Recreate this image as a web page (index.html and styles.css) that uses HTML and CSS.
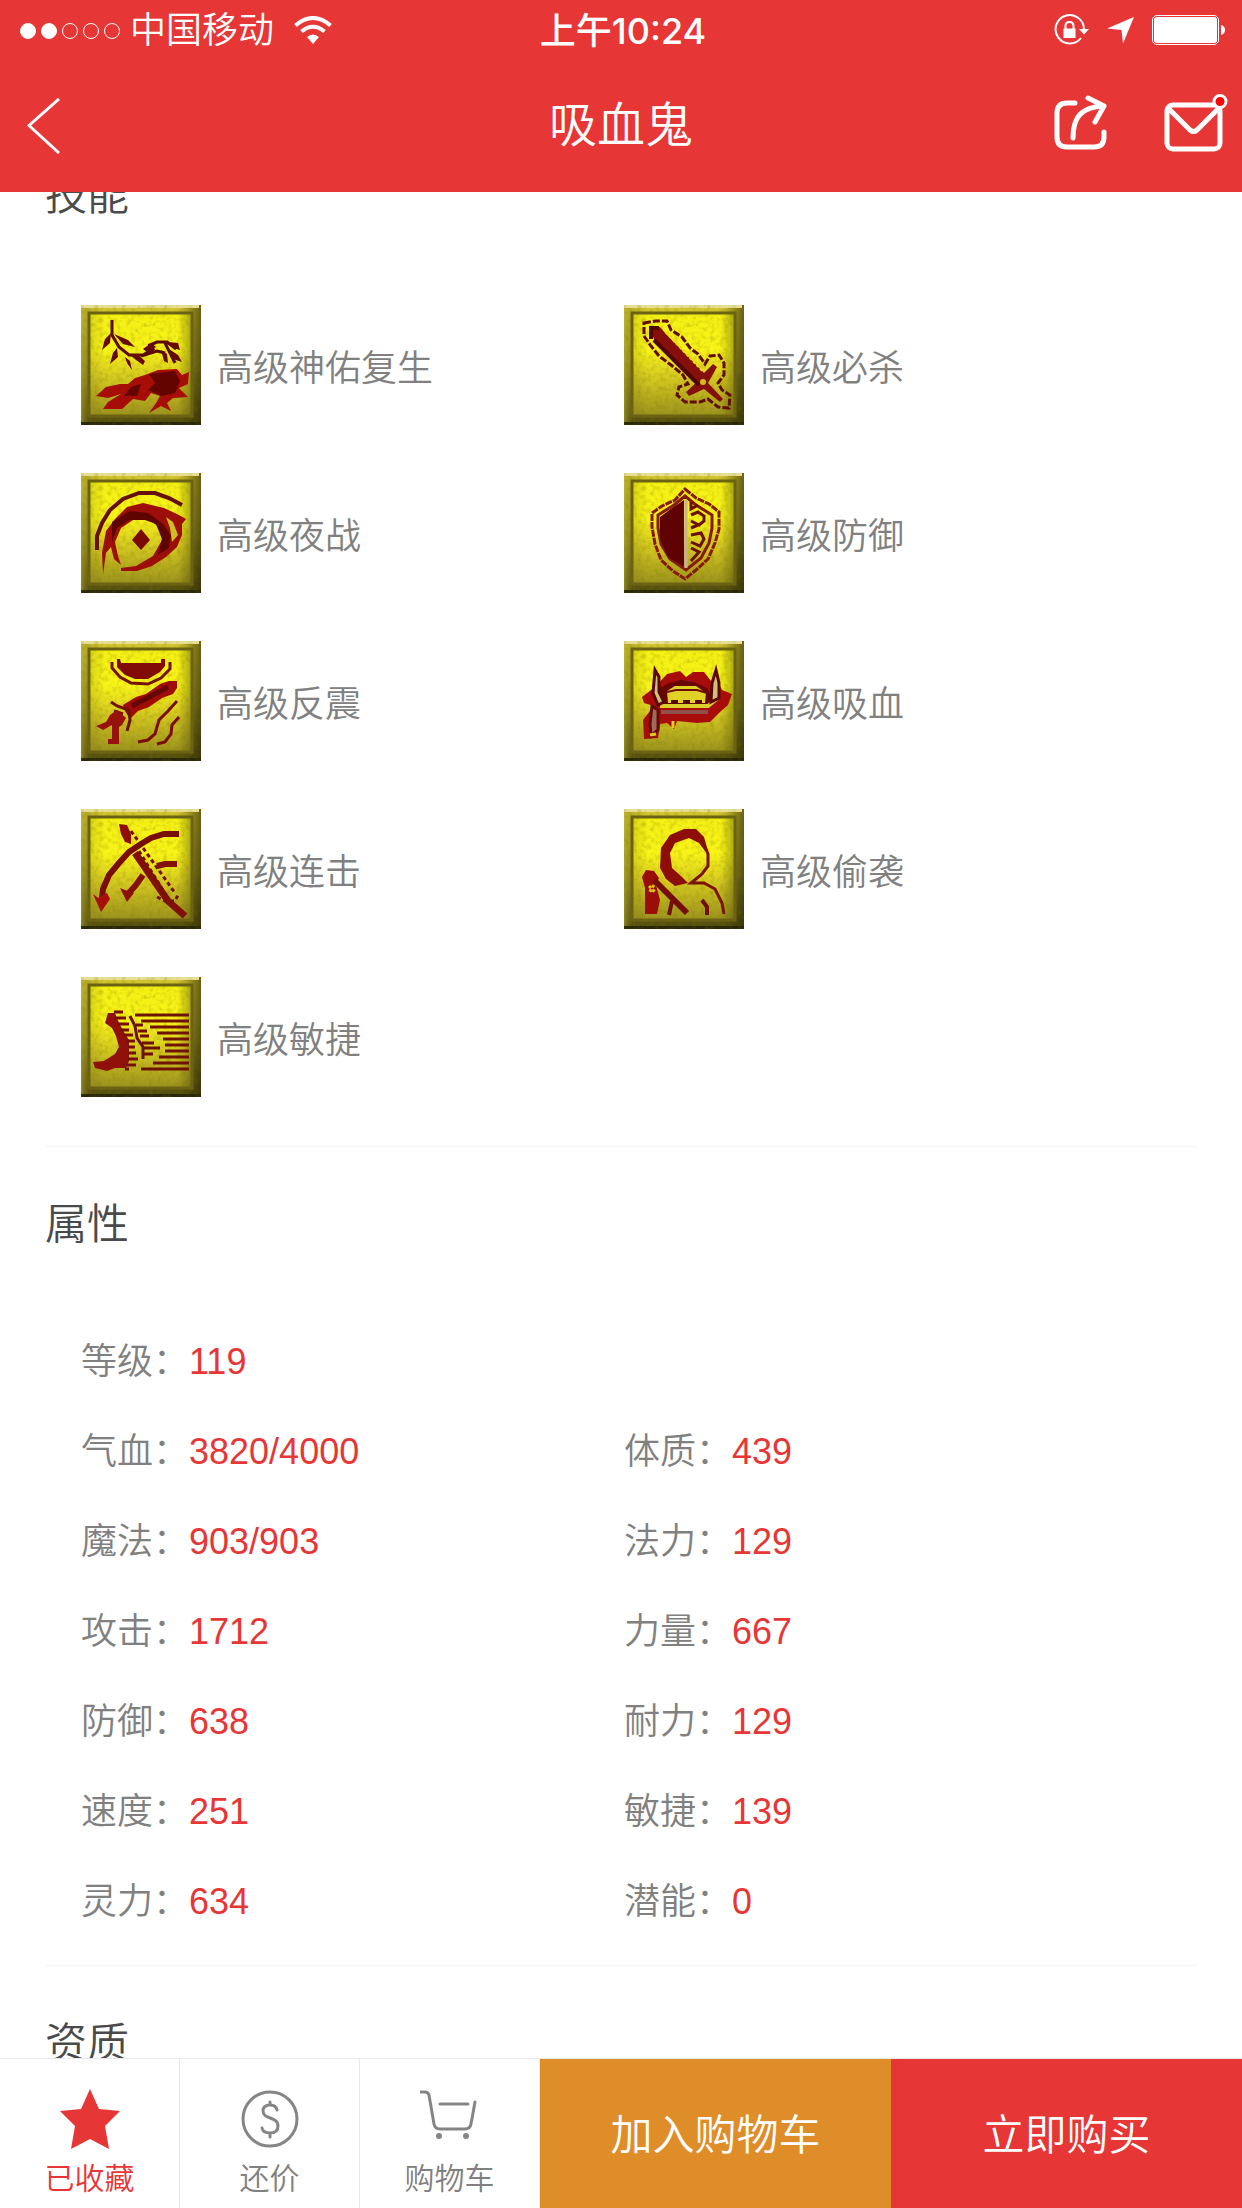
FILE: index.html
```html
<!DOCTYPE html>
<html lang="zh-CN">
<head>
<meta charset="utf-8">
<meta name="viewport" content="width=device-width, initial-scale=1">
<title>吸血鬼</title>
<link rel="stylesheet" href="styles.css">
</head>
<body>
<svg class="defs" width="0" height="0" aria-hidden="true">
  <defs>
    <linearGradient id="face" x1="0" y1="0" x2="0" y2="1">
      <stop offset="0" stop-color="#f4f014"/><stop offset=".35" stop-color="#f8f418"/>
      <stop offset=".6" stop-color="#d8cd20"/><stop offset="1" stop-color="#99901e"/>
    </linearGradient>
    <linearGradient id="rim" x1="0" y1="0" x2="0" y2="1">
      <stop offset="0" stop-color="#d6ca30"/><stop offset=".5" stop-color="#a39a26"/><stop offset="1" stop-color="#4f490e"/>
    </linearGradient>
    <linearGradient id="side" x1="0" y1="0" x2="1" y2="0">
      <stop offset="0" stop-color="#b5aa30" stop-opacity=".6"/><stop offset=".07" stop-color="#665e12" stop-opacity=".2"/>
      <stop offset=".2" stop-color="#665e12" stop-opacity="0"/><stop offset=".8" stop-color="#4a430a" stop-opacity="0"/>
      <stop offset="1" stop-color="#2c2706" stop-opacity=".65"/>
    </linearGradient>
    <filter id="grain" x="0" y="0" width="1" height="1">
      <feTurbulence type="fractalNoise" baseFrequency=".22" numOctaves="2" seed="4"/>
      <feColorMatrix values="0 0 0 0 .2  0 0 0 0 .17  0 0 0 0 0  1.6 0 0 0 -.7"/>
    </filter>
    <symbol id="tile" viewBox="0 0 120 120">
      <rect width="120" height="120" fill="url(#rim)"/>
      <rect x="8" y="8" width="104" height="104" fill="url(#face)"/>
      <rect width="120" height="120" fill="url(#side)"/>
      <rect x="8" y="8" width="103" height="103" fill="none" stroke="#6a6212" stroke-width="3"/>
      <path d="M0 1.500H118" stroke="#e8df94" stroke-width="3"/>
      <path d="M0 118.500H120" stroke="#2a2608" stroke-width="3"/>
      <rect width="120" height="120" filter="url(#grain)" opacity=".4"/>
    </symbol>
  </defs>
</svg>

<header class="top">
  <div class="status">
    <div class="status-left">
      <span class="signal" role="img" aria-label="信号"><i class="dot full"></i><i class="dot full"></i><i class="dot"></i><i class="dot"></i><i class="dot"></i></span>
      <span>中国移动</span>
      <svg class="wifi" width="38" height="28" viewBox="0 0 38 28" aria-hidden="true">
        <g fill="none" stroke="#fff" stroke-width="4"><path d="M1.500 9.500Q19-5.500 36.500 9.500"/><path d="M7.500 15.500Q19 6 30.500 15.500"/></g>
        <path d="M13 21Q19 16 25 21L19 28Z" fill="#fff"/>
      </svg>
    </div>
    <time class="clock">上午10:24</time>
    <div class="status-right">
      <svg width="36" height="32" viewBox="0 0 36 32" aria-hidden="true">
        <path d="M27 24A14.200 14.200 0 1 1 30 15" fill="none" stroke="#fff" stroke-width="2"/>
        <path d="M25 15H35L30 20.500ZM9.500 14.500H21.500V24H9.500Z" fill="#fff"/>
        <path d="M11.500 15V12Q11.500 8 15.500 8T19.500 12V15" fill="none" stroke="#fff" stroke-width="2"/>
      </svg>
      <svg width="28" height="28" viewBox="0 0 28 28" aria-hidden="true"><path d="M27 1L16 27.500L14.500 14L0 12.500Z" fill="#fff"/></svg>
      <svg width="74" height="30" viewBox="0 0 74 30" aria-hidden="true">
        <rect x=".5" y=".5" width="66" height="29" rx="4.500" fill="none" stroke="#fff"/>
        <rect x="2" y="2" width="63" height="26" rx="3" fill="#fff"/>
        <path d="M69 10Q73 11 73 15T69 20Z" fill="#fff"/>
      </svg>
    </div>
  </div>
  <nav class="bar">
    <button class="icon-button" aria-label="返回">
      <svg width="34" height="56" viewBox="0 0 34 56"><path d="M32 1L2 27.500L32 55" fill="none" stroke="#fff" stroke-width="3" stroke-linejoin="round"/></svg>
    </button>
    <h1 class="page-title">吸血鬼</h1>
    <div class="bar-actions">
      <button class="icon-button" aria-label="分享">
        <svg width="54" height="56" viewBox="0 0 54 56" fill="none" stroke="#fff" stroke-width="5" stroke-linecap="round" stroke-linejoin="round">
          <path d="M21 8H13Q3 8 3 18V42Q3 52 13 52H40Q50 52 50 42V37"/><path d="M19 43C19 22 27 12 50 11M34 3L50 11L41 27"/>
        </svg>
      </button>
      <button class="icon-button" aria-label="消息">
        <svg width="66" height="58" viewBox="0 0 66 58" fill="none" stroke="#fff" stroke-width="5" stroke-linejoin="round">
          <rect x="3" y="11" width="53" height="44" rx="6"/><path d="M4 14L26 36Q29.500 39 33 36L55 14"/>
          <circle cx="56" cy="7.500" r="6" fill="#f00" stroke-width="3"/>
        </svg>
      </button>
    </div>
  </nav>
</header>

<main class="content">
  <section class="section">
    <h2 class="section-title">技能</h2>
    <ul class="skills">
      <li class="skill">
        <svg class="skill-icon" viewBox="0 0 120 120" aria-hidden="true"><use href="#tile"/>
          <g fill="none" stroke="#5c0a04" stroke-width="3"><path d="M31 15V30L38 42L48 50H62L72 44L69 40L76 37H86L95 44M60 51L76 46L84 48M84 38L94 58"/></g>
          <g fill="#650a04"><path d="M30 28L24 34L21 45L29 38ZM33 29L47 35L54 42L42 39ZM36 43L32 48L29 59L37 52ZM44 52L46 58L51 65L49 56ZM48 49L56 49L64 56L62 60L55 55ZM70 38L62 44L66 47L75 42ZM87 37L97 38L99 45L92 43ZM80 45L83 56L87 58L86 49ZM88 44L97 50L101 57L92 54Z"/></g>
          <path d="M15 91L25 82L39 79H47L54 73L64 70L77 65L96 64L101 70L108 67L107 79L98 83L107 92L92 93L86 98L90 106L80 101L68 108L75 98L79 91L70 88L64 96L52 94L41 104L22 104L27 97L40 89L27 93Z" fill="#a50d06"/>
          <path d="M68 69L94 66L99 76L94 88L81 91L67 85L74 78ZM50 82L60 79L56 91L43 91Z" fill="#640401"/>
        </svg><span>高级神佑复生</span>
      </li>
      <li class="skill">
        <svg class="skill-icon" viewBox="0 0 120 120" aria-hidden="true"><use href="#tile"/>
          <path d="M20 18L32 16H43L47 25L58 32L66 43L74 49L81 59L86 51L95 50L100 58V70L94 78L98 85L106 90L105 103L94 102L84 94L76 97H61L53 90L55 82L64 79L59 70L47 60L35 51L27 41L20 31Z" fill="none" stroke="#620d04" stroke-width="3" stroke-dasharray="7 2"/>
          <path d="M26 23L36 22L41 28L80 68L89 59L93 62L84 78L99 94L96 97L80 84L65 91L62 87L73 77L31 37Z" fill="#85100b"/>
          <path d="M27 34V23H35M30 35L75 80" fill="none" stroke="#520400" stroke-width="4"/>
          <path d="M42 27L79 66" fill="none" stroke="#f0d51a" stroke-width="3" stroke-dasharray="3 2"/><circle cx="79" cy="77" r="3" fill="#d5bb14"/>
        </svg><span>高级必杀</span>
      </li>
      <li class="skill">
        <svg class="skill-icon" viewBox="0 0 120 120" aria-hidden="true"><use href="#tile"/>
          <path d="M16 77V63L21 50L29 37L42 26L58 20H74L88 25L101 32" fill="none" stroke="#65100a" stroke-width="4"/>
          <path d="M22 101L21 80L25 58L34 46L46 34L62 30L83 35L96 41L105 46L101 51V62L96 74L85 84L71 93L56 98H40V95L55 93L72 83L81 67L79 55L69 47L52 47L40 55L34 69L37 83L40 92L33 86L30 74L25 80Z" fill="#9c0e07"/>
          <path d="M31 49L49 38L67 40L81 50L90 62L88 75L77 82L81 66L75 51L64 47L48 47L36 55L31 69Z" fill="#5e0502"/>
          <path d="M85 44L92 49L97 62L91 69L89 55Z" fill="#d0be20"/><path d="M60 56L69 67L60 77L51 67Z" fill="#7a0904"/>
        </svg><span>高级夜战</span>
      </li>
      <li class="skill">
        <svg class="skill-icon" viewBox="0 0 120 120" aria-hidden="true"><use href="#tile"/>
          <g fill="none" stroke="#86190a" stroke-width="3"><path d="M61 16L72 25L85 31L95 39V56L91 70L84 86L72 97L61 106L49 98L37 87L31 71L28 54V40L38 33L51 27Z" stroke-dasharray="7 1"/><path d="M61 23L72 32L88 42V55L85 70L77 85L62 97L46 86L37 71L34 55V42L50 32Z"/></g>
          <path d="M60 27L48 35L36 44V66L44 84L60 94Z" fill="#5e0301"/><path d="M62 27V95" stroke="#c8aea0" stroke-width="3"/>
          <path d="M67 29V36L74 32M67 42L74 39L80 43V48L75 52L67 48M67 55L74 52M67 62L77 60L80 66L76 73L67 69M67 75L75 79L67 88" fill="none" stroke="#691009" stroke-width="3"/>
        </svg><span>高级防御</span>
      </li>
      <li class="skill">
        <svg class="skill-icon" viewBox="0 0 120 120" aria-hidden="true"><use href="#tile"/>
          <path d="M36 18V26L44 34L54 38H67L79 31L84 25V18H80V22H40L39 18Z" fill="#830b05"/>
          <path d="M31 21V27L39 36L50 42L67 43L80 37L89 28V21" fill="none" stroke="#75120a" stroke-width="3"/>
          <path d="M42 64L55 56L65 53L79 43L88 40H96V47L92 53L81 57L68 66L57 70L49 78L44 70Z" fill="#a00b05"/><path d="M51 65L87 46" stroke="#640703" stroke-width="5"/>
          <path d="M30 61L36 65L48 69L49 79L46 90M33 70L42 73" fill="none" stroke="#70100a" stroke-width="3"/>
          <path d="M15 85L25 81L29 74L36 69L45 77L41 84L38 86V103H27V98H31V84L22 89Z" fill="#96120a"/>
          <path d="M96 60L87 70L78 79L74 93L67 99L57 101M98 76L91 84L90 93L84 101L76 103" fill="none" stroke="#7b0d08" stroke-width="3"/>
        </svg><span>高级反震</span>
      </li>
      <li class="skill">
        <svg class="skill-icon" viewBox="0 0 120 120" aria-hidden="true"><use href="#tile"/>
          <path d="M18 56L31 46L43 33L56 30L62 36L69 31H80L87 40L95 43L98 49L108 53L104 64L96 71L86 81L73 82L53 80L50 88L43 82L36 83L34 97L20 98L19 79L26 70L30 65L20 62Z" fill="#a90d0b"/>
          <path d="M29 51L45 42L57 39L70 41L83 47L88 55L82 66H36Z" fill="#680603"/>
          <path d="M43 50L51 45H72L82 52L81 62H44Z" fill="#e0d126"/><path d="M43 51L52 49H73L83 52" fill="none" stroke="#6c0c05" stroke-width="2"/>
          <path d="M36 65H84L95 56" fill="none" stroke="#ded02c" stroke-width="4"/><path d="M47 61H54M59 61H66M71 61H78" stroke="#590704" stroke-width="4"/>
          <path d="M37 71H84" stroke="#8e5048" stroke-width="4"/>
          <path d="M31 29L35 36V51L40 61L34 64L29 52ZM92 29L95 42V57L87 61L88 42Z" fill="#d0c080" stroke="#5b0703" stroke-width="3"/>
          <path d="M28 65L34 69V89L27 95L26 83Z" fill="#9f6c5c" stroke="#650b05" stroke-width="3"/><path d="M49 80V87M26 94L32 93" stroke="#e0cc25" stroke-width="3"/>
        </svg><span>高级吸血</span>
      </li>
      <li class="skill">
        <svg class="skill-icon" viewBox="0 0 120 120" aria-hidden="true"><use href="#tile"/>
          <path d="M98 25H83L70 29L60 35L48 43L38 54L28 66L22 80L20 96" fill="none" stroke="#790e08" stroke-width="6"/>
          <path d="M12 85L17 89L26 84L29 90L20 103Z" fill="#a5100a"/>
          <path d="M38 15L46 16L50 25V35L44 33L40 25Z" fill="#8e0d07"/><path d="M54 44L87 92L104 107" fill="none" stroke="#811009" stroke-width="7"/>
          <path d="M50 22L94 84M58 42L86 88M76 88L84 92H94L98 84" fill="none" stroke="#761109" stroke-width="3" stroke-dasharray="4 3"/>
          <path d="M96 55H84L76 57M62 66L55 76L47 85" fill="none" stroke="#83110a" stroke-width="6"/><path d="M39 79L44 81L53 84L46 93Z" fill="#8c0f08"/>
        </svg><span>高级连击</span>
      </li>
      <li class="skill">
        <svg class="skill-icon" viewBox="0 0 120 120" aria-hidden="true"><use href="#tile"/>
          <path d="M36 59L37 39L46 26L60 20H72L80 28L84 42L81 42L75 34L65 29L51 34L46 44L48 59L58 68L64 74L51 77L42 70Z" fill="#8d0e09"/>
          <path d="M78 31L84 45V57L78 65L67 74H80L91 80L98 94L100 105" fill="none" stroke="#7d120a" stroke-width="3"/>
          <path d="M78 91L83 98V106M48 92L45 106" fill="none" stroke="#711009" stroke-width="4"/>
          <path d="M18 68L22 61L30 62L35 69L32 76L36 91L33 105H21V79Z" fill="#9a0d08"/>
          <path d="M30 71L63 104" stroke="#750d07" stroke-width="6"/><path d="M25 77L32 84M30 76L25 84M38 72L44 77" stroke="#d9bf18" stroke-width="3" stroke-dasharray="3 2"/>
        </svg><span>高级偷袭</span>
      </li>
      <li class="skill">
        <svg class="skill-icon" viewBox="0 0 120 120" aria-hidden="true"><use href="#tile"/>
          <path d="M27 36H34L38 46L44 57L48 63V84L45 91H34L26 94L14 91L12 85L23 84L34 77L38 70L35 59L31 51L24 46Z" fill="#90100a"/>
          <path d="M33 35H42M34 41H45M36 47H48M39 53H48M43 58H52M46 64H54M47 70H54M47 76H55M47 82H57M45 88H55M44 92H48" stroke="#76100a" stroke-width="3"/>
          <path d="M49 39L54 49L56 61L62 70V82M55 48H62M57 54H66M59 59H68M61 66H73M62 71H79M62 77H72" fill="none" stroke="#6e0f08" stroke-width="3"/>
          <path d="M54 38H108M60 44H108M69 50H108M76 56H108M82 62H108M84 68H108M84 74H108M78 80H108M72 86H108M60 92H108" stroke="#6e1308" stroke-width="3"/>
        </svg><span>高级敏捷</span>
      </li>
    </ul>
  </section>

  <section class="section">
    <h2 class="section-title">属性</h2>
    <dl class="attributes">
      <div class="attribute wide"><dt>等级：</dt><dd>119</dd></div>
      <div class="attribute"><dt>气血：</dt><dd>3820/4000</dd></div>
      <div class="attribute"><dt>体质：</dt><dd>439</dd></div>
      <div class="attribute"><dt>魔法：</dt><dd>903/903</dd></div>
      <div class="attribute"><dt>法力：</dt><dd>129</dd></div>
      <div class="attribute"><dt>攻击：</dt><dd>1712</dd></div>
      <div class="attribute"><dt>力量：</dt><dd>667</dd></div>
      <div class="attribute"><dt>防御：</dt><dd>638</dd></div>
      <div class="attribute"><dt>耐力：</dt><dd>129</dd></div>
      <div class="attribute"><dt>速度：</dt><dd>251</dd></div>
      <div class="attribute"><dt>敏捷：</dt><dd>139</dd></div>
      <div class="attribute"><dt>灵力：</dt><dd>634</dd></div>
      <div class="attribute"><dt>潜能：</dt><dd>0</dd></div>
    </dl>
  </section>

  <section class="section">
    <h2 class="section-title">资质</h2>
  </section>
</main>

<footer class="actions">
  <button class="tab active">
    <svg width="60" height="60" viewBox="0 0 60 60" aria-hidden="true"><path d="M30 0L39 20L60 22L45 37L49 60L30 50L11 60L15 37L0 22L21 20Z" fill="#e73636"/></svg>
    <span>已收藏</span>
  </button>
  <button class="tab">
    <svg width="60" height="60" viewBox="0 0 60 60" fill="none" stroke="#858585" stroke-width="3" stroke-linecap="round" aria-hidden="true">
      <circle cx="30" cy="30" r="27"/><path d="M37 21Q36 16 30 16Q23 16 23 22C23 31 38 27 38 37Q38 44 30 44Q23 44 22 39M30 13V16M30 44V48"/>
    </svg>
    <span>还价</span>
  </button>
  <button class="tab">
    <svg width="60" height="60" viewBox="0 0 60 60" fill="none" stroke="#858585" stroke-width="3" stroke-linecap="round" aria-hidden="true">
      <path d="M0 3H5Q8 3 9 6L14 35Q15 40 20 40H45Q50 40 51 35L55 13M20 15H48"/><circle cx="19" cy="47" r="3" fill="#858585" stroke="none"/><circle cx="46" cy="47" r="3" fill="#858585" stroke="none"/>
    </svg>
    <span>购物车</span>
  </button>
  <button class="buy cart">加入购物车</button>
  <button class="buy now">立即购买</button>
</footer>
</body>
</html>
```
FILE: styles.css
```css
* {
  box-sizing: border-box;
}

body {
  margin: 0;
  height: 100vh;
  display: grid;
  grid-template-rows: auto minmax(0, 1fr) auto;
  background: #fff;
  color: #808080;
  font-family: "Liberation Sans", "Noto Sans CJK SC", sans-serif;
  font-size: 36px;
  font-weight: 350;
  line-height: 48px;
}

h1, h2, ul, dl, dd {
  margin: 0;
  padding: 0;
  font-weight: inherit;
}

button {
  margin: 0;
  padding: 0;
  border: 0;
  background: none;
  color: inherit;
  font: inherit;
}

svg {
  display: block;
  flex: none;
}

.defs {
  position: absolute;
}

/* Header */
.top {
  background: #e73636;
  color: #fff;
}

.status,
.bar {
  display: grid;
  grid-template-columns: 1fr auto 1fr;
  align-items: center;
}

.status {
  height: 60px;
  padding: 0 16px 0 20px;
}

.status-left,
.status-right {
  display: flex;
  align-items: center;
}

.status-left span,
.clock {
  padding-top: 2px;
}

.status-left {
  gap: 10px;
}

.status-right {
  justify-content: flex-end;
  gap: 17px;
}

.signal {
  display: flex;
  gap: 5px;
}

.dot {
  width: 16px;
  height: 16px;
  border: 1px solid #fff;
  border-radius: 50%;
}

.dot.full {
  background: #fff;
}

.wifi {
  margin-left: 10px;
}

.clock {
  font-family: Inter, "Noto Sans CJK SC", sans-serif;
  font-weight: 500;
}

.bar {
  height: 132px;
  padding: 0 12px;
}

.bar .icon-button:first-child {
  justify-self: start;
}

.bar > .icon-button {
  padding-left: 15px;
}

.page-title {
  font-size: 48px;
  line-height: 60px;
}

.bar-actions {
  display: flex;
  justify-content: flex-end;
  gap: 56px;
  padding-bottom: 6px;
}

/* Scrolling content */
.content {
  overflow: hidden;
  padding: 0 45px;
}

.section + .section {
  border-top: 3px solid #fafafa;
  padding-top: 47px;
}

.section:first-child {
  margin-top: -26px;
}

.section-title {
  color: #4a4a4a;
  font-size: 42px;
  line-height: 60px;
}

.skills,
.attributes {
  display: grid;
  grid-template-columns: 1fr 1fr;
  padding-left: 36px;
  padding-right: 30px;
}

.skills {
  list-style: none;
  padding-top: 55px;
  padding-bottom: 24px;
}

.skill {
  display: flex;
  align-items: center;
  gap: 16px;
  padding: 24px 0;
}

.skill span {
  padding-top: 7px;
}

.skill-icon {
  width: 120px;
  height: 120px;
}

.attributes {
  padding-top: 62px;
  padding-bottom: 17px;
}

.attribute {
  display: flex;
  align-items: center;
  height: 90px;
}

.attribute.wide {
  grid-column: 1 / -1;
}

.attribute dd {
  color: #e73636;
}

/* Bottom bar */
.actions {
  display: grid;
  grid-template-columns: 180fr 180fr 180fr 351fr 351fr;
  height: 150px;
  border-top: 1px solid #e8e8e8;
  background: #fff;
}

.tab {
  display: flex;
  flex-direction: column;
  align-items: center;
  justify-content: flex-end;
  gap: 10px;
  padding-bottom: 9px;
  border-right: 1px solid #e8e8e8;
  font-size: 30px;
  line-height: 40px;
}

.tab.active {
  color: #e73636;
}

.buy {
  padding-top: 4px;
  color: #fff;
  font-size: 42px;
}

.cart {
  background: #df8d29;
}

.now {
  background: #e73636;
}
```
